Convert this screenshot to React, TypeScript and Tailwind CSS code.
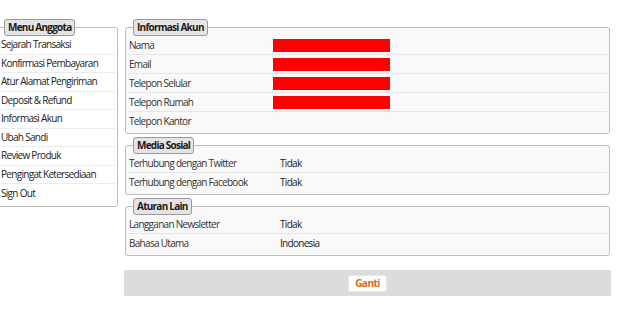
import React from 'react';

const MENU = [
  'Sejarah Transaksi',
  'Konfirmasi Pembayaran',
  'Atur Alamat Pengiriman',
  'Deposit & Refund',
  'Informasi Akun',
  'Ubah Sandi',
  'Review Produk',
  'Pengingat Ketersediaan',
  'Sign Out',
];

type Row = { label: string; value?: string; redacted?: boolean };

const AKUN: Row[] = [
  { label: 'Nama', redacted: true },
  { label: 'Email', redacted: true },
  { label: 'Telepon Selular', redacted: true },
  { label: 'Telepon Rumah', redacted: true },
  { label: 'Telepon Kantor' },
];

const SOSIAL: Row[] = [
  { label: 'Terhubung dengan Twitter', value: 'Tidak' },
  { label: 'Terhubung dengan Facebook', value: 'Tidak' },
];

const LAIN: Row[] = [
  { label: 'Langganan Newsletter', value: 'Tidak' },
  { label: 'Bahasa Utama', value: 'Indonesia' },
];

function Legend({ children, offset = 'ml-[5px]' }: { children: React.ReactNode; offset?: string }) {
  return (
    <legend className={`${offset} h-[17px] px-[3px] rounded-[3px] border border-[#9a9a9a] bg-[#e4e4e4] text-[10px] font-bold leading-[15px] tracking-[-0.75px] text-[#1a1a1a]`}>
      {children}
    </legend>
  );
}

function Panel({ title, rows, labelWidth }: { title: string; rows: Row[]; labelWidth: string }) {
  return (
    <fieldset className="rounded-[3px] border border-[#bdbdbd] bg-[#f9f9f9] px-[2px] pb-[2px]">
      <Legend>{title}</Legend>
      {rows.map((r, i) => (
        <div
          key={r.label}
          className={`flex items-center h-[19px] pl-[1px] ${i < rows.length - 1 ? 'border-b border-[#e6e6e6]' : ''}`}
        >
          <span className={`${labelWidth} shrink-0 text-[#333]`}>{r.label}</span>
          {r.redacted && <span className="block w-[117px] h-[13px] bg-[#ff0000]" />}
          {r.value && <span className="text-[#222]">{r.value}</span>}
        </div>
      ))}
    </fieldset>
  );
}

export default function App() {
  return (
    <div
      className="w-[624px] h-[311px] bg-white text-[10px] tracking-[-0.7px]"
      style={{ fontFamily: '"Open Sans", "Noto Sans", sans-serif' }}
    >
      <div className="flex pt-[19px] pr-[14px]">
        <fieldset className="-ml-[4px] w-[122px] h-[188px] shrink-0 rounded-[3px] border border-[#bdbdbd] bg-white pl-[4px] pr-[2px]">
          <Legend offset="ml-[3px]">Menu Anggota</Legend>
          {MENU.map((m, i) => (
            <div
              key={m}
              className={`flex items-center h-[18.5px] text-[#222] ${i < MENU.length - 1 ? 'border-b border-[#ececec]' : ''}`}
            >
              {m}
            </div>
          ))}
        </fieldset>

        <div className="ml-[7px] flex-1 flex flex-col">
          <div className="flex flex-col gap-[3px]">
            <Panel title="Informasi Akun" rows={AKUN} labelWidth="w-[144px]" />
            <Panel title="Media Sosial" rows={SOSIAL} labelWidth="w-[151px]" />
            <Panel title="Aturan Lain" rows={LAIN} labelWidth="w-[151px]" />
          </div>
          <div className="mt-[14px] -ml-[1px] -mr-[1px] h-[26px] bg-[#dcdcdc] flex items-center justify-center">
            <button className="h-[17px] px-[6px] rounded-[2px] bg-white border border-[#e6e6e6] text-[10px] font-bold tracking-[-0.5px] text-[#d2691e] leading-none">
              Ganti
            </button>
          </div>
        </div>
      </div>
    </div>
  );
}
